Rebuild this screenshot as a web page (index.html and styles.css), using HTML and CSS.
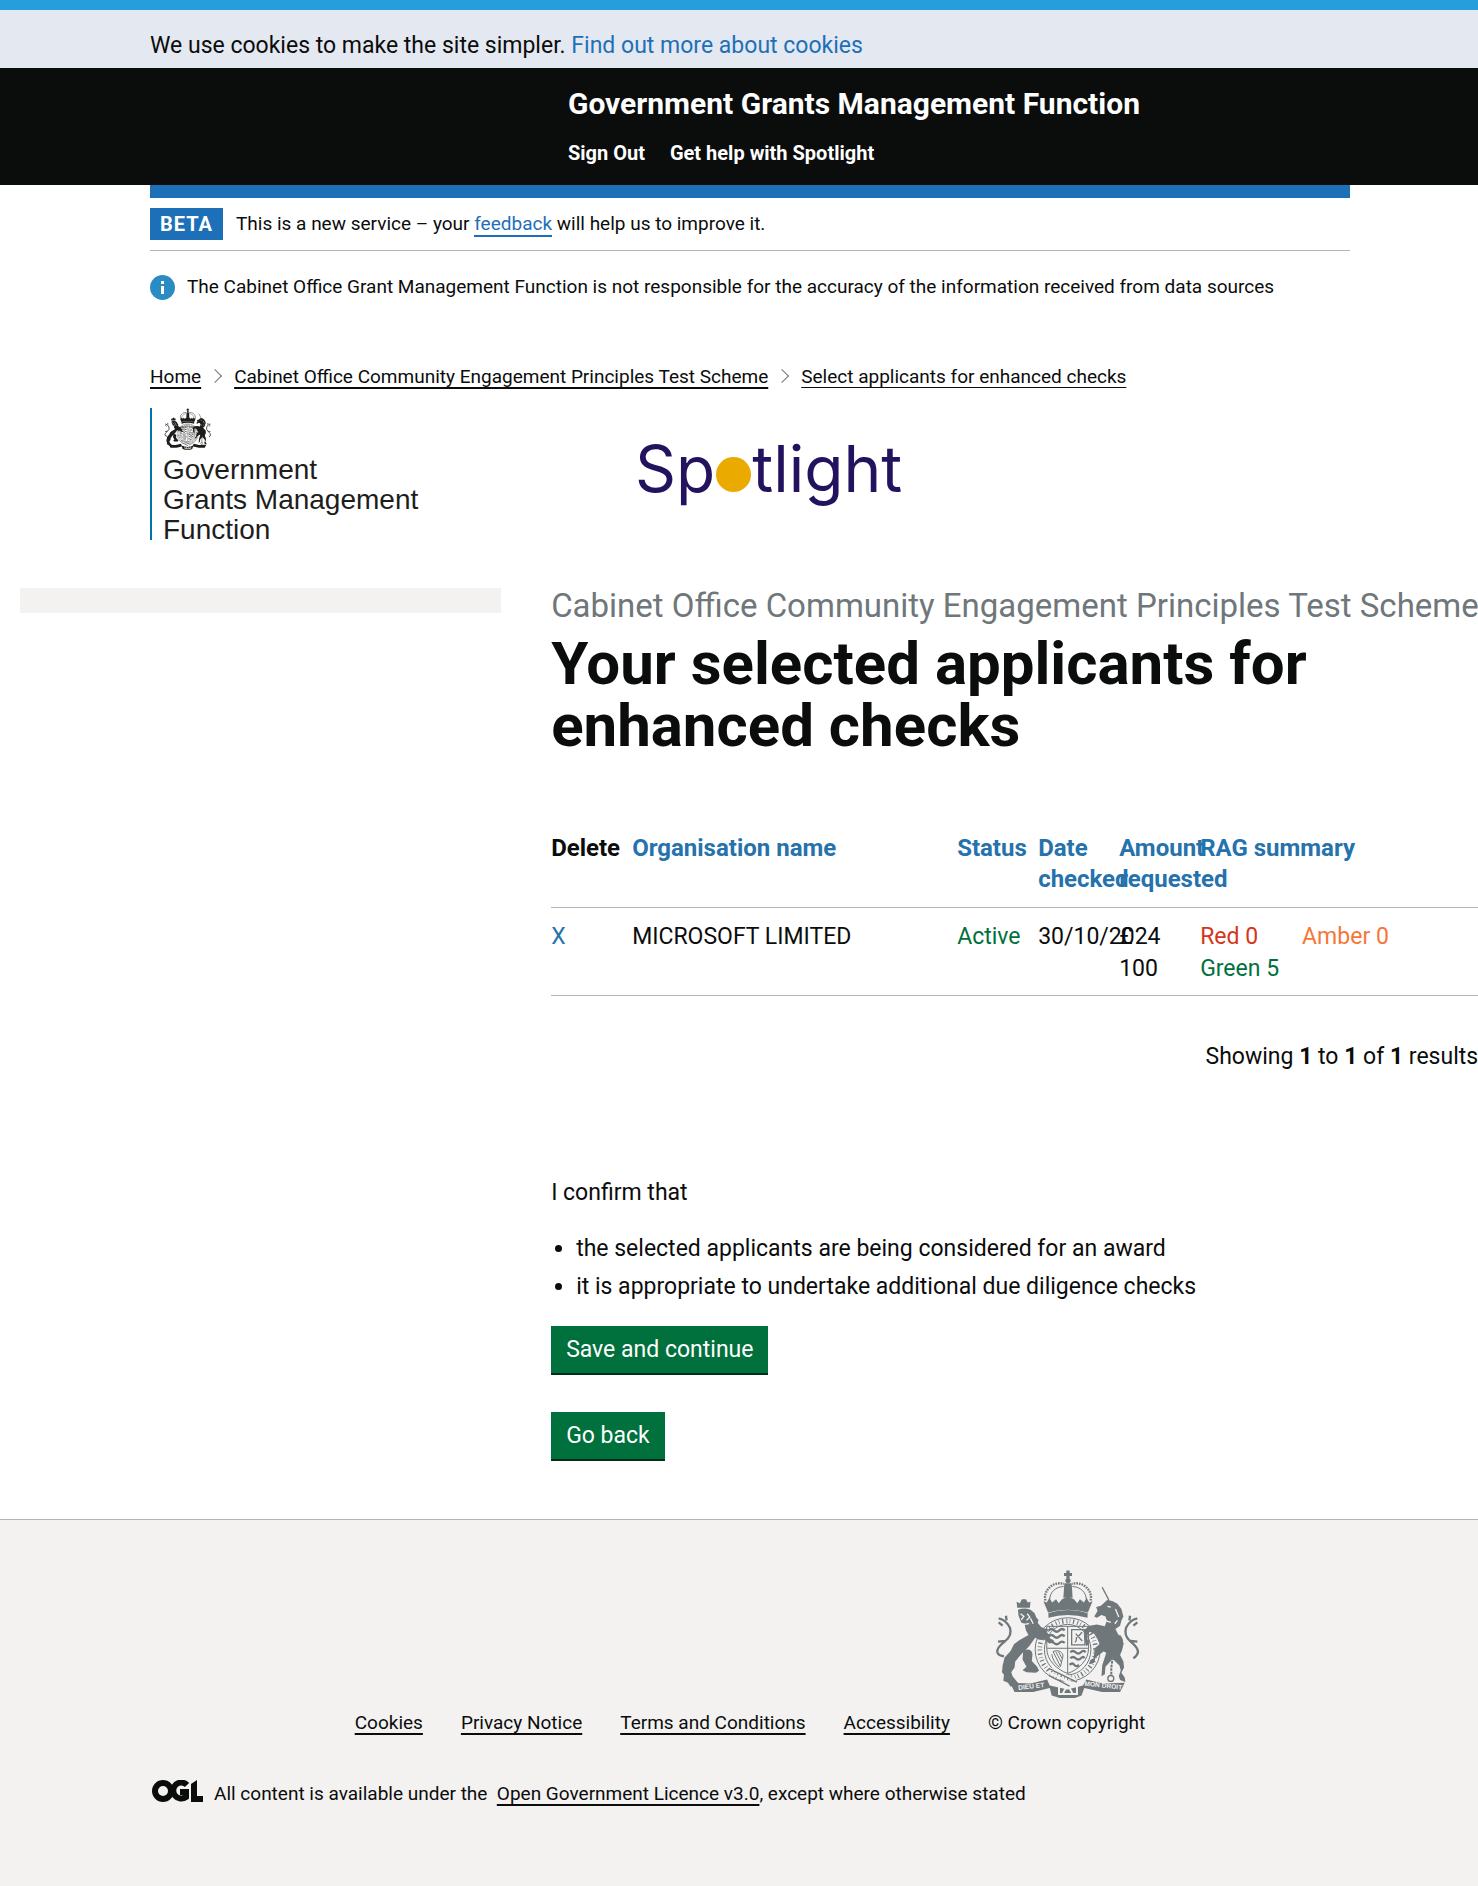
FILE: index.html
```
<!DOCTYPE html>
<html lang="en">
<head>
<meta charset="utf-8">
<meta name="viewport" content="width=device-width, initial-scale=1">
<title>Your selected applicants for enhanced checks - Spotlight</title>
<link rel="stylesheet" href="styles.css">
</head>
<body>
<svg class="symbols" aria-hidden="true">
  <symbol id="crest" viewBox="78 56 440 390">
    <g fill="currentColor">
      <!-- crown -->
      <path d="M296 60h10v7h7v9h-7v8h-10v-8h-7v-9h7z"/>
      <circle cx="301" cy="90" r="8"/>
      <path d="M290 98h22l3 44h-28z"/>
      <path d="M227 152l10 4 8-14 8 14 12-10 8 12 10-12 18-8 18 8 10 12 8-12 12 10 8-14 8 14 10-4-14 34q-62-16-120 0z"/>
      <path d="M242 188q60-18 118 0v14q-60-16-118 0z"/>
    </g>
    <g fill="none" stroke="currentColor">
      <path d="M233 150c-8-28 22-60 56-50M369 150c8-28-22-60-56-50" stroke-width="7" stroke-dasharray="5 3"/>
      <path d="M246 146c0-20 18-38 42-38M356 146c0-20-18-38-42-38" stroke-width="3"/>
      <!-- garter -->
      <ellipse cx="300" cy="298" rx="98" ry="96" stroke-width="3"/>
      <ellipse cx="300" cy="298" rx="70" ry="76" stroke-width="3"/>
      <ellipse cx="300" cy="298" rx="84" ry="86" stroke-width="14" stroke-dasharray="3 7 2 8 4 9"/>
      <path d="M237 228h126v66c0 36-30 64-63 76-33-12-63-40-63-76zM300 228v142M237 294h126" stroke-width="3"/>
      <path d="M243 240q8-8 16 0t16 0 16 0M243 258q8-8 16 0t16 0 16 0M243 278q8-8 16 0t16 0 16 0M308 306q8-8 16 0t16 0 14 0M308 324q8-8 16 0t16 0 10 0M306 344q8-8 14 0t14 0" stroke-width="7"/>
      <path d="M312 238h40v46h-40zM322 276c10-6-2-14 8-18s8-10 14-12M324 250l20 22" stroke-width="4"/>
      <path d="M256 304c18-8 30 4 30 14l-8 32M256 304l22 44M264 304l18 34M272 304l12 22M252 312q4 24 24 40" stroke-width="3"/>
      <!-- tails -->
      <path d="M92 204q22 4 34 28 8 24-16 42t-22 32q2 10 20 12M104 226l-12-10M112 272l-22 2M116 210l-2-14" stroke-width="7"/>
      <path d="M510 204q-22 4-34 28-8 24 14 42t22 32q-2 10-14 18M498 226l12-10M490 272l20 2M486 210l2-14" stroke-width="7"/>
      <path d="M404 110l20 38" stroke-width="4"/>
    </g>
    <!-- lion -->
    <g fill="currentColor">
      <path d="M148 172l-2-18 10 4 6-12h12l6 10 8-2-2 18z"/>
      <path d="M150 178q20-8 38 0l12 10 6 14 6 6-2 10 10 12 20 8-4 8 10 8v10l12 6-2 10-16-4-10-8-16 0-12-6-18 26-22 22-20 24-2 18-10 14 4 12 16 20 6 10-16-4-12 6-8-12-14-6 2-18-6-8 2-20 6-24 18-20 10-20 16-12 28-16-8-14-4-20-10-4-8-20z"/>
      <path d="M166 300q26-8 28 12l-2 20 16 18 6 12-10 6-28-2-12-6 12-10-12-22z"/>
    </g>
    <!-- unicorn -->
    <g fill="currentColor">
      <path d="M420 148l16 4 14 8 12 16 6 22-6 12-4 16-14 10 8 16 12 10 4 20-4 18-6 14 10 20 2 18-8 16 10 14 2 14-16-6-4-12 6-18-4-14-16-16-8-16-24-10-24 18-4 16-16 4 4-12 10-6 4-30 16-14-18-30-14-6-8 14 6 24-8 6-6-24-2-24 18-14 22-4 24 6 6-18-4-12-12-4-14 8-8-4 10-16-4-12 14-4z"/>
      <path d="M418 302l22 4-6 22-20 22-2 22-10 6 2-32z"/>
      <!-- motto scroll -->
      <path d="M126 398l62 2 50-12 8 18 54 12 46-12 10-18 50 12 66-2-14 28-54 0-54-12-8 22-20 8h-46l-24-8-6-22-50 12-56 0z"/>
    </g>
    <g class="crest-detail" fill="none">
      <path d="M158 190l10 8-8 10M178 190l8 10-10 10M168 222l16-2M188 204l8 16M420 168l10 2M400 206l30 10M444 176l10 24M450 210l-8 10" stroke-width="4"/>
      <path d="M274 408q26-24 54 0v24h-54zM286 430q14-34 28 0" stroke-width="6"/>
      <path d="M246 368l74 36M250 356l76 34" stroke-width="7"/>
    </g>
    <g fill="none" stroke="currentColor">
      <path d="M238 362q8-10 20 0l70 34M244 376l62 32" stroke-width="4"/>
      <path d="M456 256q20 26-4 46t-20 74" stroke-width="6" stroke-dasharray="8 3"/>
      <circle cx="430" cy="385" r="9" stroke-width="4"/>
    </g>
  </symbol>
</svg>

<div class="top-bar"></div>
<div class="cookie-banner">
  <p class="container">We use cookies to make the site simpler. <a href="#">Find out more about cookies</a></p>
</div>
<header class="header">
  <div class="container">
    <div class="header-content">
      <a class="header-name" href="#">Government Grants Management Function</a>
      <nav class="header-nav">
        <a href="#">Sign Out</a>
        <a href="#">Get help with Spotlight</a>
      </nav>
    </div>
  </div>
</header>

<div class="container">
  <div class="header-rule"></div>
  <div class="phase">
    <strong class="tag">BETA</strong>
    <span>This is a new service – your <a href="#">feedback</a> will help us to improve it.</span>
  </div>
  <div class="info">
    <svg class="info-icon" viewBox="0 0 25 25" aria-hidden="true">
      <circle cx="12.500" cy="12.500" r="12.500" fill="#2b8cc4"/>
      <path d="M11 6h3v3h-3zM11 11h3v8h-3z" fill="#fff"/>
    </svg>
    <span>The Cabinet Office Grant Management Function is not responsible for the accuracy of the information received from data sources</span>
  </div>
  <nav aria-label="Breadcrumb">
    <ol class="breadcrumbs">
      <li><a href="#">Home</a></li>
      <li><a href="#">Cabinet Office Community Engagement Principles Test Scheme</a></li>
      <li><a class="current" href="#">Select applicants for enhanced checks</a></li>
    </ol>
  </nav>
  <div class="logos">
    <div class="org-logo">
      <svg class="org-crest" role="img" aria-label="Royal coat of arms"><use href="#crest"/></svg>
      <div class="org-name">Government<br>Grants Management<br>Function</div>
    </div>
    <div class="spotlight"><span>Sp</span><span class="dot"></span><span>tlight</span></div>
  </div>
</div>

<div class="layout">
  <aside class="side-panel"></aside>
  <main class="main">
    <span class="caption">Cabinet Office Community Engagement Principles Test Scheme</span>
    <h1>Your selected applicants for enhanced checks</h1>
    <table class="applicants">
      <colgroup>
        <col class="col-narrow"><col class="col-name"><col class="col-narrow"><col class="col-narrow"><col class="col-narrow"><col>
      </colgroup>
      <thead>
        <tr>
          <th scope="col">Delete</th>
          <th scope="col"><a href="#">Organisation name</a></th>
          <th scope="col"><a href="#">Status</a></th>
          <th scope="col"><a href="#">Date checked</a></th>
          <th scope="col"><a href="#">Amount requested</a></th>
          <th scope="col"><a href="#">RAG summary</a></th>
        </tr>
      </thead>
      <tbody>
        <tr>
          <td><a href="#">X</a></td>
          <td>MICROSOFT LIMITED</td>
          <td class="green">Active</td>
          <td>30/10/2024</td>
          <td>£<br>100</td>
          <td><div class="rag"><span class="red">Red 0</span><span class="amber">Amber 0</span><span class="green">Green 5</span></div></td>
        </tr>
      </tbody>
    </table>
    <p class="results">Showing <b>1</b> to <b>1</b> of <b>1</b> results</p>
    <p class="confirm">I confirm that</p>
    <ul class="bullets">
      <li>the selected applicants are being considered for an award</li>
      <li>it is appropriate to undertake additional due diligence checks</li>
    </ul>
    <div class="actions">
      <button class="button" type="submit">Save and continue</button>
      <button class="button" type="button">Go back</button>
    </div>
  </main>
</div>

<footer class="footer">
  <div class="container">
    <div class="footer-links">
      <a href="#">Cookies</a>
      <a href="#">Privacy Notice</a>
      <a href="#">Terms and Conditions</a>
      <a href="#">Accessibility</a>
      <div class="copyright">
        <svg class="footer-crest" viewBox="78 56 440 390" aria-hidden="true">
          <use href="#crest" x="78" y="56" width="440" height="390"/>
          <g class="crest-motto">
            <text x="152" y="420" transform="rotate(-7 152 420)">DIEU ET</text>
            <text x="350" y="407" transform="rotate(6 350 407)">MON DROIT</text>
          </g>
        </svg>
        <span>© Crown copyright</span>
      </div>
    </div>
    <div class="licence">
      <svg class="ogl" viewBox="0 0 51 22" role="img" aria-label="OGL">
        <g fill="none" stroke="#0b0c0c" stroke-width="6">
          <circle cx="11" cy="11" r="8"/>
          <path d="M35 5A8 8 0 1 0 34 17v-5h-6"/>
        </g>
        <path d="M39 4l6-4v16h6v6H39z" fill="#0b0c0c"/>
      </svg>
      <span>All content is available under the &nbsp;<a href="#">Open Government Licence v3.0</a>, except where otherwise stated</span>
    </div>
  </div>
</footer>
</body>
</html>
```
FILE: styles.css
```
* { box-sizing: border-box; }

body {
  display: flex;
  flex-direction: column;
  min-height: 100vh;
  margin: 0;
  overflow-x: hidden;
  background: #fff;
  color: #0b0c0c;
  font-family: Roboto, "Liberation Sans", sans-serif;
  font-size: 23px;
  line-height: 32px;
}

p, h1, ul, ol { margin: 0; padding: 0; }
a { color: #1d70b8; text-decoration: none; }

.symbols { display: block; width: 0; height: 0; }
.container { width: 100%; max-width: 1200px; margin: 0 auto; position: relative; left: 11px; }

.top-bar { height: 10px; background: #259edb; }
.cookie-banner { padding: 20px 0 6px; background: #e4e8f0; }

.header { padding: 20px 0 16px; background: #0b0c0c; }
.header-content { margin-left: calc(33.33% + 18px); }
.header a { color: #fff; font-weight: 700; }
.header-name { display: block; font-size: 30px; line-height: 32px; }
.header-nav { display: flex; gap: 25px; margin-top: 17px; font-size: 20px; }

.header-rule { height: 13px; background: #1d70b8; }
.phase, .info, .breadcrumbs, .footer { font-size: 19px; line-height: 32px; }
.phase {
  display: flex;
  gap: 13px;
  padding: 10px 0;
  border-bottom: 1px solid #b1b4b6;
}
.phase a { border-bottom: 2px solid; }
.tag { padding: 0 10px; background: #1d70b8; color: #fff; font-size: 20px; letter-spacing: 1px; }
.info { display: flex; align-items: center; gap: 12px; margin-top: 20px; }
.info-icon { width: 25px; height: 25px; }

.breadcrumbs { display: flex; margin-top: 58px; list-style: none; }
.breadcrumbs a { color: #0b0c0c; text-decoration: underline 2px; text-underline-offset: 4px; }
.breadcrumbs .current { text-decoration-thickness: 1px; }
.breadcrumbs li + li::before {
  content: "";
  display: inline-block;
  width: 9px;
  height: 9px;
  margin: 0 14px 2px 9px;
  border: solid #6f777b;
  border-width: 1px 1px 0 0;
  transform: rotate(45deg);
}

.logos { display: flex; align-items: flex-start; margin-top: 15px; }
.org-logo {
  width: 485px;
  padding-left: 11px;
  border-left: 2px solid #0072ae;
  color: #1d1d1b;
  font-family: "Liberation Sans", Arial, sans-serif;
  font-size: 28px;
  line-height: 30px;
}
.org-crest { display: block; width: 49px; height: 42px; margin-bottom: 5px; }
.org-name { margin-bottom: -5px; }
.spotlight {
  display: flex;
  align-items: center;
  gap: 1px;
  margin-top: 21px;
  color: #23135e;
  font-family: Inter, sans-serif;
  font-size: 64px;
  line-height: 80px;
}
.dot { width: 35px; height: 35px; margin-top: 10px; border-radius: 50%; background: #ebaa00; }

.layout { display: flex; gap: 50px; padding: 48px 0 58px 20px; }
.side-panel { flex: 0 0 33%; height: 25px; background: #f3f2f1; }
.main { flex: none; width: 67%; }
.caption { display: block; color: #6f777b; font-size: 33px; line-height: 36px; }
h1 { max-width: 800px; margin-top: 9px; font-size: 60px; line-height: 62px; }

.applicants { width: 100%; margin-top: 64px; border-collapse: collapse; table-layout: fixed; text-align: left; }
.applicants tr { border-bottom: 1px solid #b1b4b6; }
.applicants th { padding: 12px 0; font-size: 24px; line-height: 31px; vertical-align: top; }
.applicants td { padding: 13px 0 10px; vertical-align: top; }
.applicants a { color: #2572ac; }
.col-narrow { width: 81px; }
.col-name { width: 325px; }
.rag { display: flex; flex-wrap: wrap; column-gap: 44px; width: 240px; }
.red { color: #d4351c; }
.amber { color: #f47738; }
.green { color: #00703c; }

.results { width: 927px; margin-top: 45px; text-align: right; }
.confirm { margin-top: 104px; }
.bullets { margin-top: 24px; padding-left: 25px; }
.bullets li + li { margin-top: 6px; }
.actions { display: flex; flex-direction: column; align-items: flex-start; gap: 37px; margin-top: 23px; }
.button {
  padding: 8px 15px;
  border: 0;
  border-bottom: 2px solid #002d18;
  background: #00703c;
  color: #fff;
  font: inherit;
  line-height: 31px;
}

.footer { flex: 1; padding: 49px 0 64px; border-top: 1px solid #b1b4b6; background: #f3f2f1; }
.footer a { color: #0b0c0c; text-decoration: underline 2px; text-underline-offset: 4px; }
.footer-links { display: flex; align-items: flex-end; justify-content: center; gap: 38px; }
.copyright { display: flex; flex-direction: column; align-items: center; gap: 8px; }
.footer-crest { width: 146px; height: 130px; color: #6f777b; }
.crest-detail { stroke: #f3f2f1; }
.crest-motto { fill: #f3f2f1; font-family: "Liberation Sans", sans-serif; font-size: 20px; font-weight: 700; }
.licence { display: flex; gap: 11px; margin-top: 39px; }
.ogl { width: 51px; height: 22px; margin: 2px 0 0 2px; }
```
